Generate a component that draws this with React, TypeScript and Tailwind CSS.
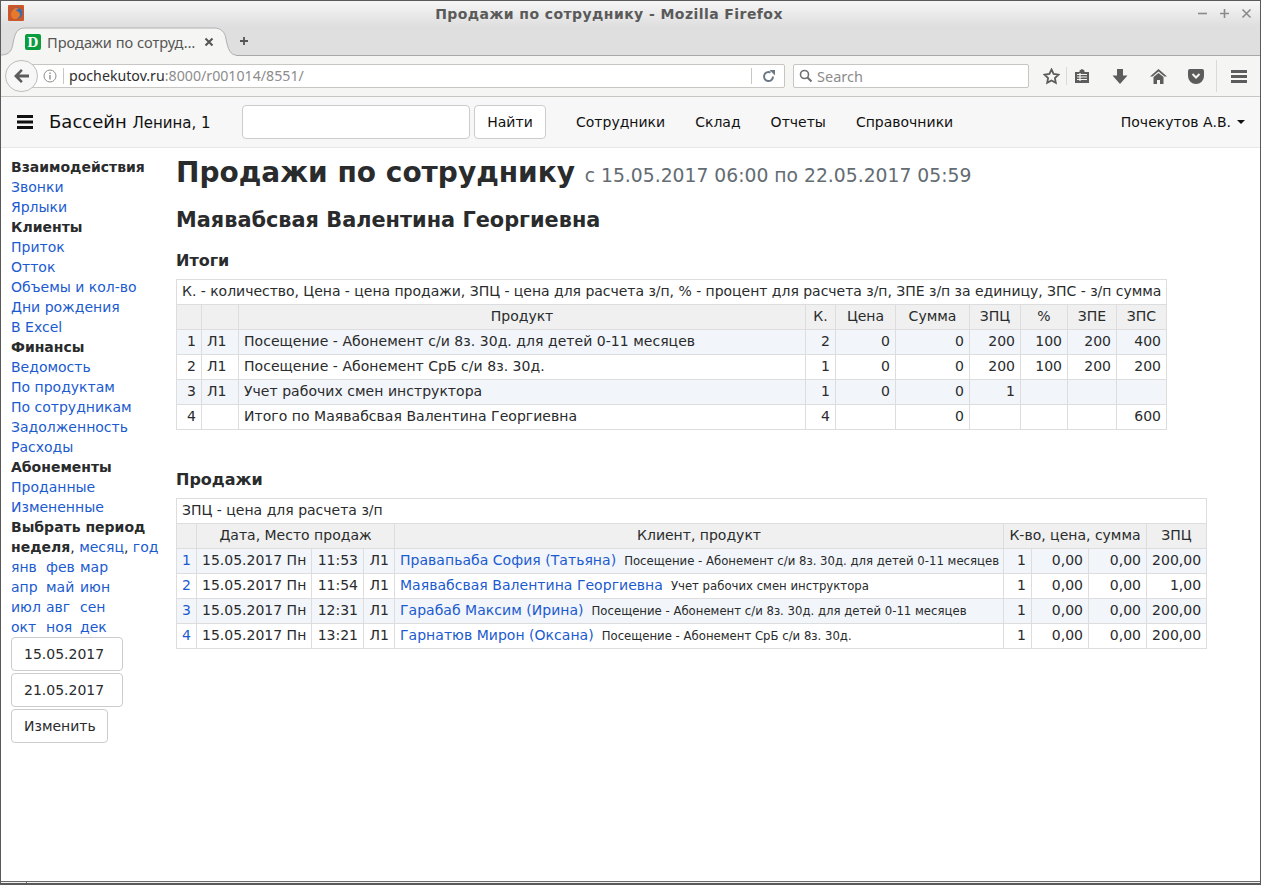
const ui = "font-['Noto_Sans','Open_Sans',sans-serif]";

function Sec({ children }: { children: React.ReactNode }) {
  return <div className="font-bold">{children}</div>;
}
function L({ children }: { children: React.ReactNode }) {
  return <a className="text-[#1b5bcf]">{children}</a>;
}
const T1 = [
  ["1", "Л1", "Посещение - Абонемент с/и 8з. 30д. для детей 0-11 месяцев", "2", "0", "0", "200", "100", "200", "400"],
  ["2", "Л1", "Посещение - Абонемент СрБ с/и 8з. 30д.", "1", "0", "0", "200", "100", "200", "200"],
  ["3", "Л1", "Учет рабочих смен инструктора", "1", "0", "0", "1", "", "", ""],
  ["4", "", "Итого по Маявабсвая Валентина Георгиевна", "4", "", "0", "", "", "", "600"],
];
const T2 = [
  ["1", "11:53", "Правапьаба София (Татьяна)", "Посещение - Абонемент с/и 8з. 30д. для детей 0-11 месяцев", "200,00"],
  ["2", "11:54", "Маявабсвая Валентина Георгиевна", "Учет рабочих смен инструктора", "1,00"],
  ["3", "12:31", "Гарабаб Максим (Ирина)", "Посещение - Абонемент с/и 8з. 30д. для детей 0-11 месяцев", "200,00"],
  ["4", "13:21", "Гарнатюв Мирон (Оксана)", "Посещение - Абонемент СрБ с/и 8з. 30д.", "200,00"],
];
const c = "border border-[#dddddd] px-[5px] pt-[1px] pb-[3px] h-[25px] whitespace-nowrap overflow-hidden";
const th = c + " bg-[#f0f0f0] font-normal text-center";
const r = c + " text-right";

export default function App() {
  return (
    <div className="h-[885px] w-[1261px] overflow-hidden bg-white border-l border-r border-t border-[#5a5a5a] flex flex-col font-['DejaVu_Sans',sans-serif] text-[14px] leading-[20px] text-[#292b2c]">
      {/* title bar */}
      <div className="h-[25px] shrink-0 flex items-center relative bg-gradient-to-b from-[#f6f6f6] to-[#dfdfdf]">
        <svg width="17" height="17" viewBox="0 0 17 17" className="ml-[7px]">
          <rect width="16" height="16" rx="1" fill="#c9572a" />
          <circle cx="9" cy="8" r="5.5" fill="#3a6db0" />
          <path d="M3 9c1-6 6-7 8-5-2 0-3 1-3 2 2 0 3 1 4 3 0 3-3 5-5 5-2.500 0-4-2-4-5z" fill="#e8792a" />
        </svg>
        <div className="absolute left-0 right-[43px] top-[3px] text-center text-[14px] tracking-[0.43px] font-bold text-[#5a5a5a]">Продажи по сотруднику - Mozilla Firefox</div>
        <div className="ml-auto mr-[6px] flex gap-[7px] items-center">
          <svg width="15" height="15" viewBox="0 0 15 15" stroke="#8a8a8a" strokeWidth="1.6"><path d="M3 7.5h9" /></svg>
          <svg width="15" height="15" viewBox="0 0 15 15" stroke="#8a8a8a" strokeWidth="1.6"><path d="M3 7.5h9M7.5 3v9" /></svg>
          <svg width="15" height="15" viewBox="0 0 15 15" stroke="#8a8a8a" strokeWidth="1.6"><path d="M3.5 3.5l8 8M11.5 3.5l-8 8" /></svg>
        </div>
      </div>
      {/* tab bar */}
      <div className="h-[30px] shrink-0 bg-[#dfdfdf] border-b border-[#a8a8a8] flex items-end relative">
        <div className={"relative -mb-px h-[29px] w-[235px] flex items-center pl-[24px] " + ui}>
          <svg width="235" height="29" viewBox="0 0 235 29" className="absolute left-0 top-0">
            <path d="M0 28C8 28 11 24 12 16 14 6 16 1 24 1H213C220 1 224 5 225 12 227 23 230 28 235 28V29H0Z" fill="#f5f5f4" />
            <path d="M0 28C8 28 11 24 12 16 14 6 16 1 24 1H213C220 1 224 5 225 12 227 23 230 28 235 28" fill="none" stroke="#b0b0b0" />
          </svg>
          <span className="relative w-[16px] h-[16px] rounded-[2px] bg-[#0b9c3f] text-white text-[15px] leading-[16px] font-bold text-center font-['Liberation_Serif',serif]">D</span>
          <span className="relative ml-[6px] text-[14.6px] text-[#555555]">Продажи по сотруд…</span>
          <svg width="10" height="10" viewBox="0 0 10 10" stroke="#555" strokeWidth="2" className="relative ml-[9px]"><path d="M1.5 1.5l7 7M8.5 1.5l-7 7" /></svg>
        </div>
        <svg width="10" height="10" viewBox="0 0 10 10" stroke="#555" strokeWidth="1.8" className="ml-[3px] mb-[9px]"><path d="M1 5h8M5 1v8" /></svg>
      </div>
      {/* toolbar */}
      <div className="h-[41px] shrink-0 bg-[#f5f5f4] border-b border-[#c8c6c2] flex items-center relative">
        <div className="relative ml-[4px] h-[32px] w-[33px] rounded-full bg-[#f7f7f7] border border-[#c0bdb8] z-10 flex items-center justify-center">
          <svg width="16" height="14" viewBox="0 0 16 14" fill="#5c5c5c"><path d="M7 0L0 7l7 7 1.8-1.8L5.2 8.5H15v-3H5.2l3.6-3.7z" /></svg>
        </div>
        <div className={"-ml-[8px] pl-[12px] h-[24px] w-[755px] bg-white border border-[#c8c6c2] rounded-r-[2px] flex items-center text-[14.2px] " + ui}>
          <svg width="14" height="14" viewBox="0 0 14 14" fill="none" stroke="#8e8e8e"><circle cx="7" cy="7" r="6" /><path d="M7 6v4.5M7 3.5v1.5" strokeWidth="1.4" /></svg>
          <span className="ml-[6px] h-[16px] border-l border-[#c8c6c2]" />
          <span className="ml-[5px] text-[#2e2e2e]">pochekutov.ru</span>
          <span className="text-[#8c8c8c]">:8000/r001014/8551/</span>
          <span className="ml-auto h-[16px] border-l border-[#c8c6c2]" />
          <svg width="13" height="13" viewBox="0 0 13 13" fill="none" stroke="#6c7885" strokeWidth="2" className="ml-[10px] mr-[9px]"><path d="M11 6.5A4.5 4.5 0 1 1 8.5 2.5" /><path d="M7.5 0L13 0V5.5z" fill="#6c7885" stroke="none" /></svg>
        </div>
        <div className={"ml-[8px] h-[24px] w-[236px] bg-white border border-[#c8c6c2] rounded-[2px] flex items-center pl-[5px] text-[14.5px] text-[#8c8c8c] " + ui}>
          <svg width="14" height="14" viewBox="0 0 14 14" fill="none" stroke="#6f6f6f" strokeWidth="1.6"><circle cx="5.5" cy="5.5" r="4" /><path d="M8.5 8.5l4 4" strokeWidth="2" /></svg>
          <span className="ml-[4px]">Search</span>
        </div>
        <svg width="17" height="17" viewBox="0 0 17 17" fill="none" stroke="#5c5c5c" strokeWidth="1.8" className="ml-[14px]"><path d="M8.5 1.5l2.1 4.5 4.9.6-3.6 3.4.9 4.9-4.3-2.4-4.3 2.4.9-4.9L1.5 6.6 6.4 6z" /></svg>
        <span className="ml-[6px] h-[18px] border-l border-[#dcdad6]" />
        <svg width="16" height="16" viewBox="0 0 16 16" className="ml-[7px]"><path d="M1 4h4.5V2.5L8 1l2.5 1.500V4H15v11H1z" fill="#5c5c5c" /><path d="M3 6.5h10M3 9h10M3 11.5h10M6 5v8" stroke="#f5f5f4" strokeWidth="1.2" /></svg>
        <svg width="16" height="15" viewBox="0 0 16 15" fill="#5c5c5c" className="ml-[22px]"><path d="M5 0h6v6.5h4.500L8 15 .5 6.500H5z" /></svg>
        <svg width="17" height="15" viewBox="0 0 17 15" fill="#5c5c5c" className="ml-[22px]"><path d="M8.5 0L17 7.500h-2.500L8.500 2.500l-6 5H0zM3.500 8l5-4 5 4v7H10v-4H7v4H3.500z" /></svg>
        <svg width="16" height="15" viewBox="0 0 16 15" className="ml-[21px]"><path d="M2 0h12a2 2 0 0 1 2 2v5a8 8 0 0 1-16 0V2a2 2 0 0 1 2-2z" fill="#5c5c5c" /><path d="M4.5 5l3.500 3.500L11.500 5" stroke="#f5f5f4" strokeWidth="2" fill="none" /></svg>
        <span className="ml-[12px] h-[32px] border-l border-[#dcdad6]" />
        <svg width="16" height="13" viewBox="0 0 16 13" fill="#5c5c5c" className="ml-[14px]"><path d="M0 0h16v3H0zM0 5h16v3H0zM0 10h16v3H0z" /></svg>
      </div>
      {/* navbar */}
      <div className="h-[51px] shrink-0 bg-[#f7f7f7] border-b border-[#e7e7e7] flex items-center text-[#111111]">
        <svg width="16" height="14" viewBox="0 0 16 14" fill="#111" className="ml-[16px]"><path d="M0 0h16v3H0zM0 5.5h16v3H0zM0 11h16v3H0z" /></svg>
        <div className="ml-[16px] w-[162px] text-[18px] whitespace-nowrap">Бассейн <span className="text-[15px]">Ленина, 1</span></div>
        <div className="ml-[31px] w-[228px] h-[34px] bg-white border border-[#cccccc] rounded-[4px]" />
        <button className="ml-[4px] h-[34px] w-[72px] bg-white border border-[#cccccc] rounded-[4px]">Найти</button>
        <div className="ml-[30px] flex gap-[30px]"><a>Сотрудники</a><a>Склад</a><a>Отчеты</a><a>Справочники</a></div>
        <div className="ml-auto mr-[15px] flex items-center">Почекутов А.В.<span className="ml-[6px] w-0 h-0 border-x-[4px] border-x-transparent border-t-[4px] border-t-[#111111]" /></div>
      </div>
      {/* body */}
      <div className="flex-1 flex min-h-0">
        <div className="w-[175px] shrink-0 pl-[10px] pt-[9px]">
          <Sec>Взаимодействия</Sec>
          <div><L>Звонки</L></div><div><L>Ярлыки</L></div>
          <Sec>Клиенты</Sec>
          <div><L>Приток</L></div><div><L>Отток</L></div><div><L>Объемы и кол-во</L></div><div><L>Дни рождения</L></div><div><L>В Excel</L></div>
          <Sec>Финансы</Sec>
          <div><L>Ведомость</L></div><div><L>По продуктам</L></div><div><L>По сотрудникам</L></div><div><L>Задолженность</L></div><div><L>Расходы</L></div>
          <Sec>Абонементы</Sec>
          <div><L>Проданные</L></div><div><L>Измененные</L></div>
          <Sec>Выбрать период</Sec>
          <div className="whitespace-nowrap"><b>неделя</b>, <L>месяц</L>, <L>год</L></div>
          {[["янв", "фев", "мар"], ["апр", "май", "июн"], ["июл", "авг", "сен"], ["окт", "ноя", "дек"]].map((row) => (
            <div key={row[0]} className="grid grid-cols-[35px_34px_40px]">{row.map((m) => <L key={m}>{m}</L>)}</div>
          ))}
          <div className="w-[112px] h-[34px] border border-[#cccccc] rounded-[4px] flex items-center pl-[12px]">15.05.2017</div>
          <div className="mt-[2px] w-[112px] h-[34px] border border-[#cccccc] rounded-[4px] flex items-center pl-[12px]">21.05.2017</div>
          <div className="mt-[2px] w-[97px] h-[34px] border border-[#cccccc] rounded-[4px] flex items-center pl-[12px]">Изменить</div>
        </div>
        <div className="flex-1 min-w-0 pt-[8px]">
          <h1 className="text-[28px] leading-[34px] font-bold whitespace-nowrap">Продажи по сотруднику <small className="text-[18.75px] font-normal text-[#636c72]">с 15.05.2017 06:00 по 22.05.2017 05:59</small></h1>
          <h3 className="mt-[15px] text-[20.85px] leading-[25px] font-bold">Маявабсвая Валентина Георгиевна</h3>
          <h4 className="mt-[18px] text-[16px] leading-[20px] font-bold">Итоги</h4>
          <table className="mt-[8px] w-[990px] table-fixed border-collapse">
            <colgroup>
              {[25, 37, 567, 30, 60, 74, 51, 47, 49, 50].map((w, i) => <col key={i} style={{ width: w }} />)}
            </colgroup>
            <tbody>
              <tr><td colSpan={10} className={c + " tracking-[-0.03px]"}>К. - количество, Цена - цена продажи, ЗПЦ - цена для расчета з/п, % - процент для расчета з/п, ЗПЕ з/п за единицу, ЗПС - з/п сумма</td></tr>
              <tr>{["", "", "Продукт", "К.", "Цена", "Сумма", "ЗПЦ", "%", "ЗПЕ", "ЗПС"].map((h, i) => <th key={i} className={th}>{h}</th>)}</tr>
              {T1.map((row, i) => (
                <tr key={i} className={i % 2 === 0 && i < 3 ? "bg-[#f2f5fa]" : ""}>
                  {row.map((v, j) => <td key={j} className={j === 1 ? c : j === 2 ? c + " tracking-[0.035px]" : r}>{v}</td>)}
                </tr>
              ))}
            </tbody>
          </table>
          <h4 className="mt-[40px] text-[16px] leading-[20px] font-bold">Продажи</h4>
          <table className="mt-[8px] w-[1030px] table-fixed border-collapse">
            <colgroup>
              {[20, 115, 52, 31, 609, 28, 57, 58, 60].map((w, i) => <col key={i} style={{ width: w }} />)}
            </colgroup>
            <tbody>
              <tr><td colSpan={9} className={c}>ЗПЦ - цена для расчета з/п</td></tr>
              <tr>
                <th className={th}></th><th colSpan={3} className={th}>Дата, Место продаж</th><th className={th}>Клиент, продукт</th>
                <th colSpan={3} className={th}>К-во, цена, сумма</th><th className={th}>ЗПЦ</th>
              </tr>
              {T2.map((row, i) => (
                <tr key={i} className={i % 2 === 0 ? "bg-[#f2f5fa]" : ""}>
                  <td className={c + " text-center"}><L>{row[0]}</L></td>
                  <td className={c}>15.05.2017 Пн</td>
                  <td className={r}>{row[1]}</td>
                  <td className={r}>Л1</td>
                  <td className={c + " tracking-[0.03px]"}><L>{row[2]}</L><span className="ml-[8px] text-[11.7px] leading-[14px] tracking-normal">{row[3]}</span></td>
                  <td className={r}>1</td><td className={r}>0,00</td><td className={r}>0,00</td><td className={r}>{row[4]}</td>
                </tr>
              ))}
            </tbody>
          </table>
        </div>
      </div>
      {/* window bottom edge */}
      <div className="h-[4px] shrink-0 border-t border-[#6a6a6a] bg-[#efefef] border-b-2 border-b-[#5a5a5a] flex">
        <span className="ml-[25px] border-l border-[#6a6a6a]" />
      </div>
    </div>
  );
}
